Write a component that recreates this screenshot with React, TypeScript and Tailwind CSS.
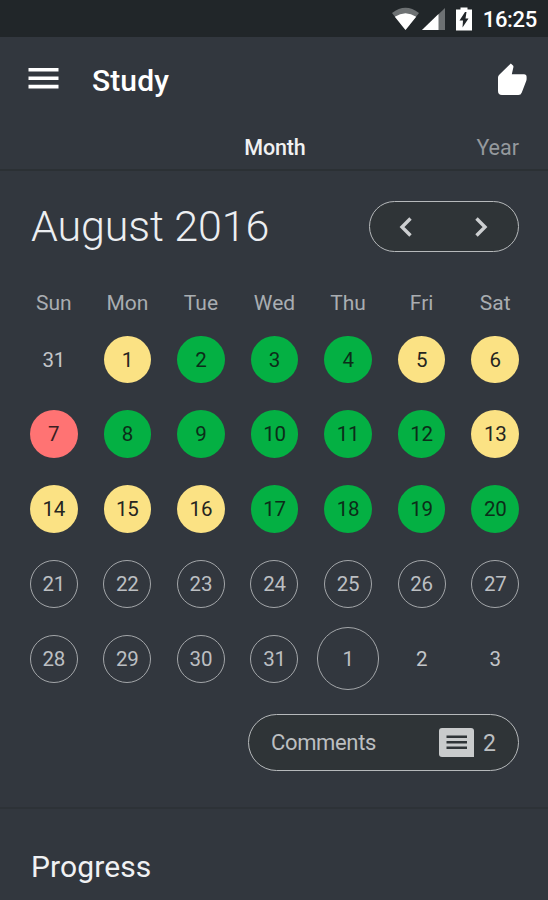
import { clsx } from 'clsx';

type DayStatus = 'plain' | 'yellow' | 'green' | 'red' | 'empty' | 'today';

interface Day {
  label: number;
  status: DayStatus;
}

const WEEKDAYS = ['Sun', 'Mon', 'Tue', 'Wed', 'Thu', 'Fri', 'Sat'];

const STATUS_CLASSES: Record<DayStatus, string> = {
  plain: 'size-[48px] text-[#c3c6c9]',
  yellow: 'size-[47.5px] bg-[#fbe284] text-[#25251f]',
  green: 'size-[47.5px] bg-[#04b043] text-[#0c2d19]',
  red: 'size-[47.5px] bg-[#ff7373] text-[#3a2022]',
  empty: 'size-[48px] border border-[#a3a6a9] text-[#bcbfc2]',
  today: 'size-[62.5px] border border-[#a3a6a9] text-[#bcbfc2]',
};

const YELLOW_DAYS = [1, 5, 6, 13, 14, 15, 16];

function augustStatus(day: number): DayStatus {
  if (day === 7) return 'red';
  if (day > 20) return 'empty';
  return YELLOW_DAYS.includes(day) ? 'yellow' : 'green';
}

const DAYS: Day[] = [
  { label: 31, status: 'plain' },
  ...Array.from({ length: 31 }, (_, i) => ({ label: i + 1, status: augustStatus(i + 1) })),
  { label: 1, status: 'today' },
  { label: 2, status: 'plain' },
  { label: 3, status: 'plain' },
];

function StatusBar() {
  return (
    <div className="flex h-[37px] items-center justify-end bg-[#212629] pr-[11px] text-white">
      <svg className="mr-[3px] h-[24px] w-[27px]" viewBox="0 0 27 24">
        <path d="M0 6Q13.5-4.5 27 6L13.5 23Z" fill="#6d7173" />
        <path d="M2.8 9.8Q13.5 2.8 24.2 9.8L13.5 23Z" fill="#fff" />
      </svg>
      <svg className="mr-[11px] h-[24px] w-[23px]" viewBox="0 0 23 24">
        <path d="M0 23L23 1V23Z" fill="#6d7173" />
        <path d="M0 23L16.5 7V23Z" fill="#fff" />
      </svg>
      <svg className="mr-[11px] h-[24px] w-[16px]" viewBox="0 0 16 24">
        <path d="M4.5 0.5h7v2H16V23.5H0V2.5h4.5Z" fill="#fff" />
        <path d="M9 5L3.5 13.5H7L6.5 20.5L12.5 11.5H9.5L10.5 5Z" fill="#212629" />
      </svg>
      <span className="mt-[2px] text-[22px] leading-none font-medium tracking-[-0.3px]">16:25</span>
    </div>
  );
}

function Header() {
  return (
    <header className="flex h-[84px] items-center pr-[21.5px] pl-[28px] text-white">
      <button className="mr-[33px]" aria-label="Menu">
        <svg className="block h-[22px] w-[31px]" viewBox="0 0 31 22" fill="#fff">
          <path d="M0.5 0h30v3.6H0.5zM0.5 8.4h30V12H0.5zM0.5 16.8h30v3.6H0.5z" />
        </svg>
      </button>
      <h1 className="mt-[3px] text-[30px] leading-none font-medium tracking-[0.1px]">Study</h1>
      <button className="ml-auto" aria-label="Like">
        <svg className="block h-[33px] w-[29px]" viewBox="0 0 29 33" fill="#fff">
          <path d="M0 14.5Q0 13 1 12L12.8 0.4L15 2.5Q15.6 3.2 15.4 4.2L13.8 11.2H26Q28.6 11.2 28.6 14V16Q28.6 17 28.2 17.9L23.8 29.5Q22.9 32 20.4 32H4Q0 32 0 28Z" />
        </svg>
      </button>
    </header>
  );
}

function Tabs() {
  return (
    <nav className="flex h-[50px] items-center justify-end gap-[171px] border-b-2 border-[#2b3034] pt-[5px] pr-[29px] text-[21.5px] leading-none">
      <button className="font-medium tracking-[-0.2px] text-[#f0f1f2]">Month</button>
      <button className="text-[#95999d]">Year</button>
    </nav>
  );
}

function MonthHeading() {
  return (
    <div className="flex h-[111px] items-center justify-between pr-[29px] pl-[31px]">
      <h2 className="mb-px text-[43px] leading-none font-light tracking-[-0.1px] text-[#eceef1]">August 2016</h2>
      <div className="flex h-[51px] w-[150px] items-center justify-between rounded-full border border-[#b6b9bb] bg-[#2f3437] pr-[30px] pl-[29px]">
        <svg className="h-[20px] w-[13px]" viewBox="0 0 13 20" fill="none" stroke="#cdcfd1" strokeWidth="3.4">
          <path d="M11.5 1.5L3 10L11.5 18.5" />
        </svg>
        <svg className="h-[20px] w-[13px]" viewBox="0 0 13 20" fill="none" stroke="#cdcfd1" strokeWidth="3.4">
          <path d="M1.5 1.5L10 10L1.5 18.5" />
        </svg>
      </div>
    </div>
  );
}

function Calendar() {
  return (
    <div className="pr-[16px] pl-[17px]">
      <div className="grid h-[40px] grid-cols-7 items-center pt-[2px] text-center text-[21px] leading-none text-[#a9adb1]">
        {WEEKDAYS.map((name) => (
          <span key={name}>{name}</span>
        ))}
      </div>
      <div className="grid auto-rows-[74.8px] grid-cols-7 place-items-center">
        {DAYS.map((day, i) => (
          <div
            key={i}
            className={clsx(
              'flex items-center justify-center rounded-full pt-px text-[20.5px] leading-none tracking-[-0.2px]',
              STATUS_CLASSES[day.status],
            )}
          >
            {day.label}
          </div>
        ))}
      </div>
    </div>
  );
}

function CommentsButton() {
  return (
    <button className="mt-[18px] mr-[29px] ml-auto flex h-[57px] w-[271px] items-center rounded-full border border-[#b6b9bb] bg-[#2f3437] px-[22px] text-[#bcbfc1]">
      <span className="mt-px text-[22px] leading-none tracking-[-0.35px]">Comments</span>
      <svg className="mr-[9px] ml-auto h-[29px] w-[35px]" viewBox="0 0 35 29">
        <path d="M3 0H32Q35 0 35 3V29H3Q0 29 0 26V3Q0 0 3 0Z" fill="#c9cbcc" />
        <path d="M7.5 7.5h20.5v2.6H7.5zM7.5 13h20.5v2.6H7.5zM7.5 18.5h20.5v2.6H7.5z" fill="#2f3437" />
      </svg>
      <span className="mt-[3px] text-[23px] leading-none">2</span>
    </button>
  );
}

export default function App() {
  return (
    <div className="flex h-[900px] w-[548px] flex-col overflow-hidden bg-[#32373e] font-['Roboto',sans-serif]">
      <StatusBar />
      <Header />
      <Tabs />
      <MonthHeading />
      <Calendar />
      <CommentsButton />
      <section className="mt-[36px] flex-1 border-t-2 border-[#2d3237] pt-[43px] pl-[31px]">
        <h2 className="text-[30px] leading-none tracking-[0.1px] text-[#f0f1f3]">Progress</h2>
      </section>
    </div>
  );
}
